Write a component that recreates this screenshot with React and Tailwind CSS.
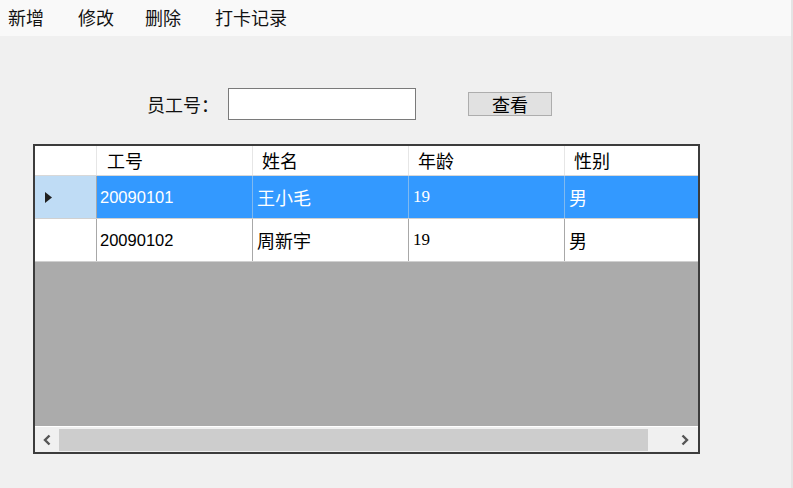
import React from "react"

const CJK = { fontFamily: '"Noto Sans CJK SC", "Noto Sans", sans-serif' }

const MENU = [
  { label: "新增", w: "w-[70px]" },
  { label: "修改", w: "w-[67px]" },
  { label: "删除", w: "w-[70px]" },
  { label: "打卡记录", w: "w-[80px]" },
]

const ROWS = [
  { id: "20090101", name: "王小毛", age: "19", sex: "男", selected: true },
  { id: "20090102", name: "周新宇", age: "19", sex: "男", selected: false },
]

function HeaderRow() {
  return (
    <div className="flex h-[30px] bg-white border-b border-[#d8d8d8] text-[18px] text-black" style={CJK}>
      <div className="w-[62px] border-r border-[#e6e6e6]" />
      <div className="w-[156px] border-r border-[#e6e6e6] pl-[10px] flex items-center">工号</div>
      <div className="w-[156px] border-r border-[#e6e6e6] pl-[9px] flex items-center">姓名</div>
      <div className="w-[156px] border-r border-[#e6e6e6] pl-[9px] flex items-center">年龄</div>
      <div className="flex-1 pl-[9px] flex items-center">性别</div>
    </div>
  )
}

function DataRow({ row }) {
  const cell = row.selected ? "bg-[#3399ff] text-white" : "bg-white text-black"
  const line = row.selected ? "border-[#7fb9f0]" : "border-[#a8a8a8]"
  return (
    <div className="flex h-[43px] border-b border-[#d0d0d0]">
      <div className={`w-[62px] border-r border-[#a8a8a8] flex items-center pl-[10px] ${row.selected ? "bg-[#bfdcf5]" : "bg-white"}`}>
        {row.selected && (
          <svg width="8" height="11" viewBox="0 0 8 11">
            <path d="M0 0 L7 5.5 L0 11 Z" fill="#202020" />
          </svg>
        )}
      </div>
      <div className={`w-[156px] border-r ${line} ${cell} pl-[3px] flex items-center text-[16.5px]`} style={{ fontFamily: '"Liberation Sans", sans-serif' }}>
        {row.id}
      </div>
      <div className={`w-[156px] border-r ${line} ${cell} pl-[4px] flex items-center text-[18px]`} style={CJK}>
        {row.name}
      </div>
      <div className={`w-[156px] border-r ${line} ${cell} pl-[4px] flex items-center text-[17px]`} style={{ fontFamily: '"Liberation Serif", serif' }}>
        {row.age}
      </div>
      <div className={`flex-1 ${cell} pl-[4px] flex items-center text-[18px]`} style={CJK}>
        {row.sex}
      </div>
    </div>
  )
}

export default function App() {
  return (
    <div className="w-[793px] h-[488px] bg-[#f0f0f0] flex overflow-hidden">
      <div className="w-[791px] h-full flex flex-col">
        {/* Menu bar */}
        <div className="h-[36px] bg-[#f9f9f9] flex items-center pl-[8px] pb-[2px] text-[18px] text-[#111]" style={CJK}>
          {MENU.map(m => (
            <div key={m.label} className={m.w}>{m.label}</div>
          ))}
        </div>

        {/* Search row */}
        <div className="mt-[52px] h-[32px] flex items-center pl-[147px]">
          <div className="w-[81px] text-[18px] text-[#111]" style={CJK}>员工号：</div>
          <div className="w-[188px] h-[32px] bg-white border border-[#7a7a7a]" />
          <button className="ml-[52px] w-[84px] h-[24px] bg-[#e1e1e1] border border-[#adadad] text-[18px] text-black leading-none flex items-center justify-center" style={CJK}>
            查看
          </button>
        </div>

        {/* Grid */}
        <div className="mt-[24px] ml-[33px] w-[667px] h-[310px] border-2 border-[#3c3c3c] flex flex-col bg-[#ababab]">
          <HeaderRow />
          {ROWS.map(r => (
            <DataRow key={r.id} row={r} />
          ))}
          <div className="flex-1" />
          {/* Horizontal scrollbar */}
          <div className="h-[26px] bg-[#f0f0f0] border-t border-white flex items-center">
            <div className="w-[24px] h-full flex items-center justify-center">
              <svg width="10" height="12" viewBox="0 0 10 12">
                <path d="M7.5 1.5 L3 6 L7.5 10.5" fill="none" stroke="#555" strokeWidth="2.4" />
              </svg>
            </div>
            <div className="w-[589px] h-[22px] bg-[#cdcdcd]" />
            <div className="flex-1" />
            <div className="w-[26px] h-full flex items-center justify-center">
              <svg width="10" height="12" viewBox="0 0 10 12">
                <path d="M2.5 1.5 L7 6 L2.5 10.5" fill="none" stroke="#555" strokeWidth="2.4" />
              </svg>
            </div>
          </div>
        </div>
      </div>
      <div className="w-[2px] h-full bg-[#e4e4e4]" />
    </div>
  )
}
